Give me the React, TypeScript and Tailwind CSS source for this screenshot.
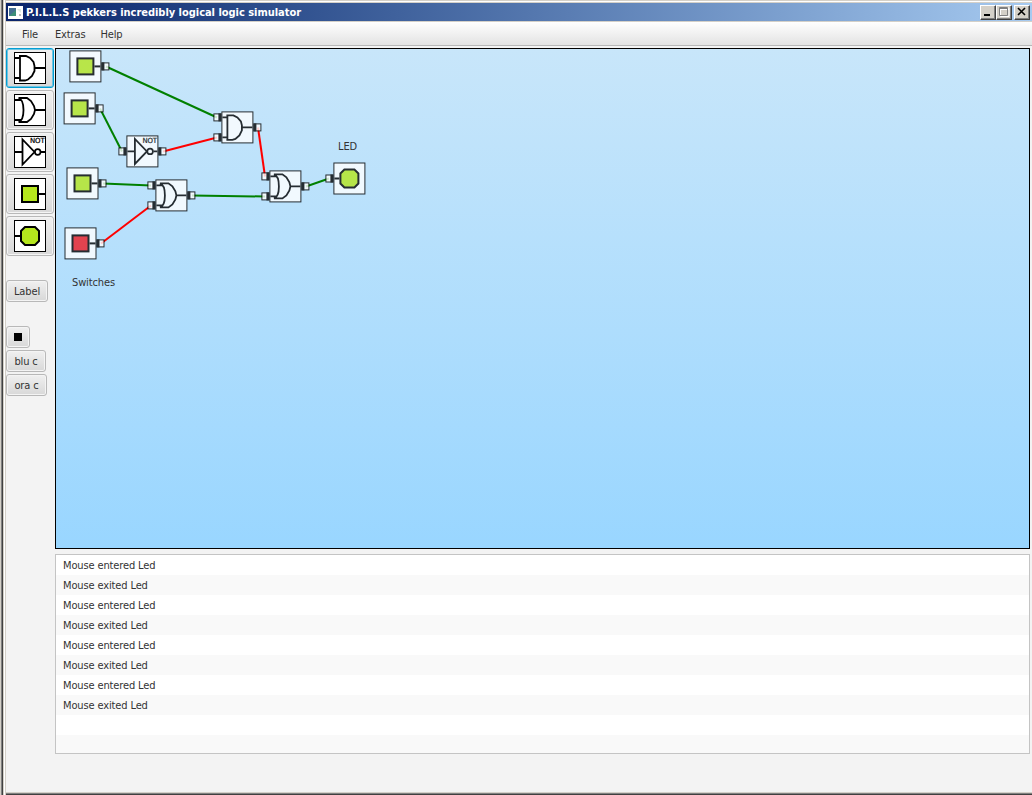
import type { ReactNode } from "react";

type Kind = "and" | "or" | "not" | "switch" | "led";

function Symbol({ kind, fill = "#b5e61d" }: { kind: Kind; fill?: string }) {
  return (
    <g fill="none" stroke="#000" strokeWidth="2">
      <rect x="0.5" y="0.5" width="31" height="31" fill="#fff" strokeWidth="1" />
      {kind === "and" && (
        <path d="M1 6H6M1 26H6M6 4V28.5M5 4H12L16 6L19.5 10L20.5 14V19L18 24L14 27.500L11 28.5H5M21 16H31" strokeWidth="1.800" />
      )}
      {kind === "or" && (
        <path d="M1 6H7M1 26H7M4.500 4H13L17 7L20 12L21 16L20 20L17 25L13 28H4.500M4.500 4C8 5 9.500 10 9.500 16C9.500 22 8 27 4.500 28M21 16H31" strokeWidth="1.800" />
      )}
      {kind === "not" && (
        <>
          <path d="M1 16H8M8.500 3.500V28.500L20.500 16ZM27 16H31" strokeWidth="1.800" />
          <circle cx="23.700" cy="16" r="2.800" strokeWidth="1.700" />
          <text x="16" y="7.300" fill="#000" stroke="#000" strokeWidth="0.200" fontSize="7" fontFamily="DejaVu Sans" textLength="14.500" lengthAdjust="spacingAndGlyphs">NOT</text>
        </>
      )}
      {kind === "switch" && (
        <>
          <rect x="8" y="8" width="16" height="16" fill={fill} />
          <path d="M25 16H31" />
        </>
      )}
      {kind === "led" && (
        <>
          <path d="M11 7H21L25 11V21L21 25H11L7 21V11Z" fill={fill} />
          <path d="M1 16H6" />
        </>
      )}
    </g>
  );
}

function Port({ x, y, input }: { x: number; y: number; input?: boolean }) {
  return (
    <g>
      <rect x={x + 0.5} y={y + 0.5} width="7" height="7" fill="#fff" stroke="#000" />
      <rect x={input ? x + 5 : x} y={y} width="3" height="8" fill="#000" />
    </g>
  );
}

const inputs: Record<Kind, number[]> = { and: [2, 22], or: [2, 22], not: [12], switch: [], led: [12] };

const gates: { kind: Kind; x: number; y: number; fill?: string }[] = [
  { kind: "switch", x: 69.4, y: 50.4 },
  { kind: "switch", x: 63.6, y: 92.4 },
  { kind: "switch", x: 66.5, y: 167.4 },
  { kind: "switch", x: 64.5, y: 227.4, fill: "#ed1c24" },
  { kind: "not", x: 126.4, y: 135.4 },
  { kind: "and", x: 221.4, y: 111.4 },
  { kind: "or", x: 155.4, y: 179.4 },
  { kind: "or", x: 269.4, y: 170.4 },
  { kind: "led", x: 333.4, y: 162.5 },
];

const wires = [
  { d: "M106 66.500L217 117.500", on: true },
  { d: "M100 108.500L122 151.500", on: true },
  { d: "M163 151.500L217 137.500", on: false },
  { d: "M103 183.500L151 185.500", on: true },
  { d: "M101 243.500L151 205.500", on: false },
  { d: "M258 127.500L265 176.500", on: false },
  { d: "M192 195.500L265 196.500", on: true },
  { d: "M306 186.500L329 178.500", on: true },
];

const button =
  "flex items-center justify-center rounded-[3px] border border-[#b8b8b8] bg-linear-to-b from-[#f0f0f0] to-[#d8d8d8] shadow-[inset_0_0_0_1px_#f4f4f4]";

function ToolButton({ kind, active }: { kind: Kind; active?: boolean }) {
  return (
    <button className={`flex h-10 w-12 shrink-0 items-center justify-center rounded-[3px] border bg-linear-to-b from-[#f0f0f0] to-[#d8d8d8] ${active ? "border-[#039ed3] shadow-[inset_0_0_0_1px_#6fc4e2]" : "border-[#b8b8b8] shadow-[inset_0_0_0_1px_#f4f4f4]"}`}>
      <svg width="32" height="32" viewBox="0 0 32 32">
        <Symbol kind={kind} />
      </svg>
    </button>
  );
}

function Caption({ children }: { children: ReactNode }) {
  return (
    <button className="flex h-[15px] w-4 items-center justify-center border border-t-white border-r-[#404040] border-b-[#404040] border-l-white bg-[#d4d0c8] shadow-[inset_-1px_-1px_0_#808080]">
      {children}
    </button>
  );
}

const log = ["Mouse entered Led", "Mouse exited Led", "Mouse entered Led", "Mouse exited Led", "Mouse entered Led", "Mouse exited Led", "Mouse entered Led", "Mouse exited Led", "", ""];

export default function App() {
  return (
    <div className="flex h-[795px] w-[1032px] overflow-hidden bg-[#f3f3f3] font-['DejaVu_Sans_Condensed','DejaVu_Sans',sans-serif] text-[11px] tracking-[-0.13px] text-[#333] [font-stretch:condensed]">
      <div className="w-px bg-[#d4d0c8]" />
      <div className="w-px bg-[#808080]" />
      <div className="w-px bg-[#404040]" />
      <div className="w-px bg-[#d4d0c8]" />
      <div className="w-px bg-white" />
      <div className="w-px bg-[#d4d0c8]" />
      <div className="flex min-w-0 grow flex-col">
        <div className="h-[3px] shrink-0 border-t border-b border-[#d4d0c8] bg-white" />
        <header className="flex h-[18px] shrink-0 items-center bg-linear-to-r from-[#0a246a] to-[#a6caf0] pr-[2px] pl-[2px]">
          <svg width="15" height="13" viewBox="0 0 15 13">
            <rect width="15" height="13" fill="#fff" />
            <rect x="1" y="2" width="7" height="8" fill="#3d8f78" />
            <path d="M1 2h7v2l-7 6z" fill="#456f91" />
            <path d="M9 3h4v4z" fill="#dcebe2" />
            <rect x="11" y="8" width="2" height="2" fill="#bbb" />
          </svg>
          <h1 className="ml-[3px] grow pt-[2px] font-bold tracking-[-0.03px] whitespace-nowrap text-white">P.I.L.L.S pekkers incredibly logical logic simulator</h1>
          <Caption><svg width="12" height="10"><rect x="2" y="7" width="6" height="2" /></svg></Caption>
          <Caption>
            <svg width="12" height="10" fill="none"><path d="M2.500 1V9.500H11V1ZM2 2.500H11" stroke="#fff" /><path d="M1.500 .5H9.500V8.500H1.500ZM1 1.500H10" stroke="#808080" /></svg>
          </Caption>
          <div className="w-[2px]" />
          <Caption><svg width="12" height="10"><path d="M2 1L9 8M9 1L2 8" stroke="#000" strokeWidth="1.600" /></svg></Caption>
        </header>
        <nav className="flex h-[25px] shrink-0 items-center gap-4 border-t border-b border-t-[#d4d0c8] border-b-[#b8b8b8] bg-linear-to-b from-white to-[#e3e3e3] pt-[3px] pl-4">
          <span>File</span><span className="pl-px">Extras</span><span className="-ml-px">Help</span>
        </nav>
        <main className="flex grow pt-[2px] pr-[2px]">
          <aside className="flex w-[49px] shrink-0 flex-col items-start gap-[2px]">
            <ToolButton kind="and" active />
            <ToolButton kind="or" />
            <ToolButton kind="not" />
            <ToolButton kind="switch" />
            <ToolButton kind="led" />
            <button className={`${button} mt-[22px] h-[22px] w-[42px] pt-[2px]`}>Label</button>
            <button className={`${button} mt-[22px] h-[22px] w-6`}><span className="h-2 w-2 bg-black" /></button>
            <button className={`${button} h-[22px] w-10 pt-[2px]`}>blu c</button>
            <button className={`${button} h-[22px] w-[41px] pt-[2px]`}>ora c</button>
          </aside>
          <section className="flex grow flex-col">
            <div className="h-[501px] border border-black bg-linear-to-b from-[#c8e6fa] to-[#99d6ff]">
              <svg width="973" height="499" viewBox="56 49 973 499">
                {wires.map((w) => (
                  <path key={w.d} d={w.d} stroke={w.on ? "#008000" : "#ff0000"} strokeWidth="2" />
                ))}
                {gates.map((g, i) => (
                  <g key={i} transform={`translate(${g.x} ${g.y})`} opacity="0.8">
                    <Symbol kind={g.kind} fill={g.fill} />
                    {inputs[g.kind].map((y) => <Port key={y} x={-8} y={y} input />)}
                    {g.kind !== "led" && <Port x={32} y={12} />}
                  </g>
                ))}
                <text x="338" y="150" fill="#333">LED</text>
                <text x="72" y="286" fill="#333">Switches</text>
              </svg>
            </div>
            <div className="mt-[5px] h-[200px] overflow-hidden border border-[#c4c4c4]">
              {log.map((line, i) => (
                <div key={i} className="flex h-5 items-center bg-white pt-[2px] pl-[7px] even:bg-[#f9f9f9]">{line}</div>
              ))}
            </div>
          </section>
        </main>
        <div className="h-px bg-[#d4d0c8]" />
        <div className="h-px bg-[#808080]" />
        <div className="h-px bg-[#404040]" />
      </div>
    </div>
  );
}
